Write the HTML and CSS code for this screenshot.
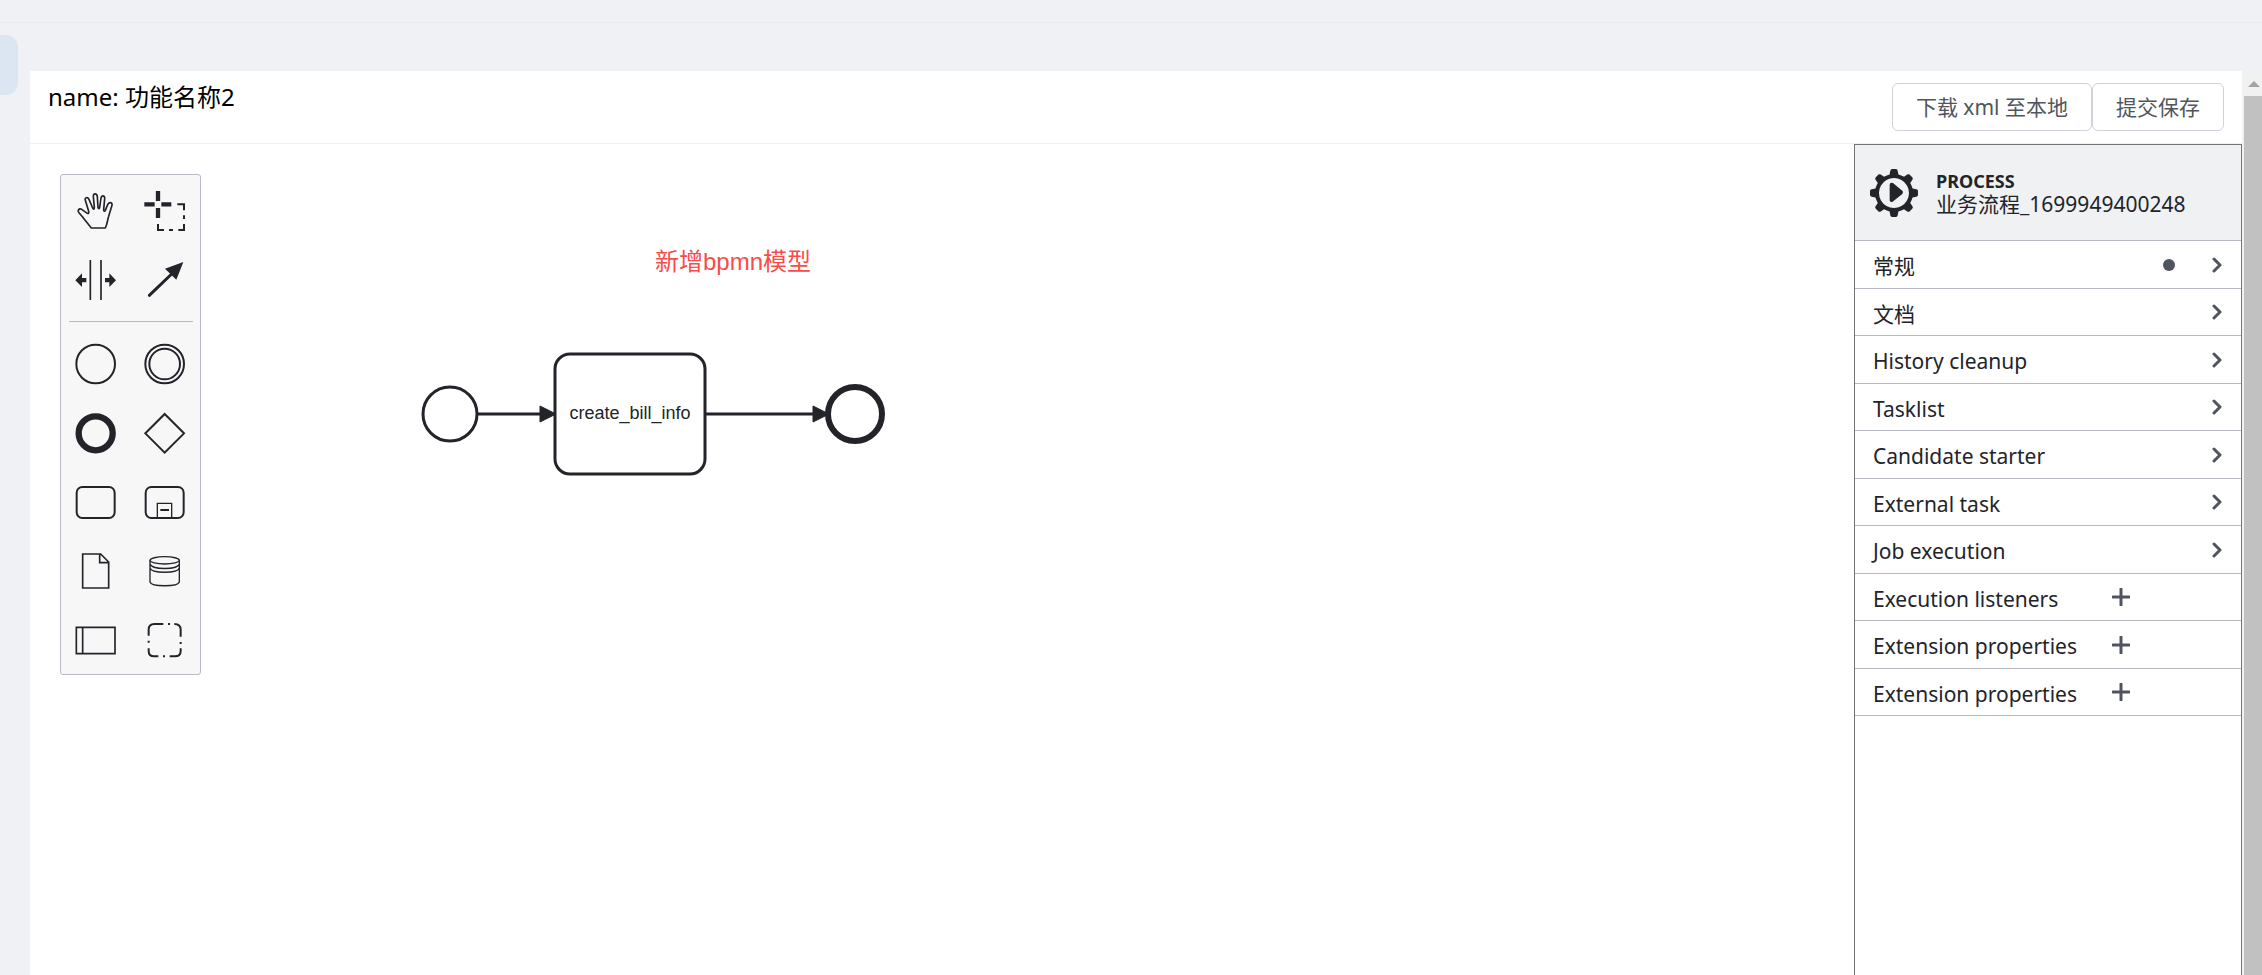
FILE: index.html
```html
<!DOCTYPE html>
<html lang="zh-CN">
<head>
<meta charset="utf-8">
<title>功能名称2</title>
<link rel="stylesheet" href="styles.css">
</head>
<body>
<div class="topbar"></div>
<div class="shell">
  <aside class="rail"><div class="rail-active"></div></aside>
  <main class="page">
    <div class="content">
      <header class="head">
        <div class="title">name: 功能名称2</div>
        <div class="actions">
          <button class="btn" type="button">下载 xml 至本地</button>
          <button class="btn" type="button">提交保存</button>
        </div>
      </header>
      <div class="editor">
        <section class="canvas">
          <svg class="diagram" width="900" height="400" viewBox="30 144 900 400">
            <text class="note" x="733" y="270" text-anchor="middle">新增bpmn模型</text>
            <g fill="none" stroke="#22242a" stroke-width="3">
              <circle cx="450" cy="414" r="27"/>
              <path d="M477 414H545M705 414H818"/>
              <rect x="555" y="354" width="150" height="120" rx="15"/>
              <circle cx="855" cy="414" r="27" stroke-width="6"/>
            </g>
            <path d="M540 406L556 414L540 422ZM813 406L829 414L813 422Z" fill="#22242a" stroke="#22242a" stroke-linejoin="round"/>
            <text class="task" x="630" y="419" text-anchor="middle">create_bill_info</text>
          </svg>
          <div class="palette">
            <div class="tools">
              <button class="tool" type="button" aria-label="Hand tool"><svg viewBox="33 33 207 207"><path stroke-width="5" stroke-linejoin="round" d="M124 189L103 163C97 154 92 149 87 143C81 136 87 129 95 133L112 145C116 147 117 144 116 139L106 106C103 97 113 95 117 103L128 129C130 134 133 133 133 128L130 95C129 84 141 84 142 95L144 127C145 132 148 132 149 127L153 99C155 89 165 91 164 101L161 134C161 139 164 140 166 136L173 119C177 109 188 112 186 121L176 154C172 166 172 177 166 189Z"/></svg></button>
              <button class="tool" type="button" aria-label="Lasso tool"><svg viewBox="240 33 207 207"><path stroke-width="13" d="M324 78V108M324 129V159M283 118H314M334 118H364"/><path stroke-width="6" d="M382 118H402V136M402 151V162M402 177V195H385M369 195H357M342 195H324V177"/></svg></button>
              <button class="tool" type="button" aria-label="Space tool"><svg viewBox="33 240 207 207"><path stroke-width="5" d="M121 285V405M153 285V405"/><path class="solid" d="M76 346L96 325V339H109V352H96V366ZM198 346L178 325V339H165V352H178V366Z"/></svg></button>
              <button class="tool" type="button" aria-label="Connect tool"><svg viewBox="240 240 207 207"><path stroke-width="9" stroke-linecap="round" d="M298 391L368 324"/><path class="solid" d="M400 291L345 311L379 344Z"/></svg></button>
            </div>
            <hr class="rule">
            <div class="tools">
              <button class="tool" type="button" aria-label="Start event"><svg viewBox="33 0 207 207"><circle cx="137" cy="105" r="58"/></svg></button>
              <button class="tool" type="button" aria-label="Intermediate event"><svg viewBox="240 0 207 207"><circle cx="344" cy="105" r="58"/><circle cx="344" cy="105" r="46"/></svg></button>
              <button class="tool" type="button" aria-label="End event"><svg viewBox="33 207 207 207"><circle cx="137" cy="313" r="51" stroke-width="19"/></svg></button>
              <button class="tool" type="button" aria-label="Gateway"><svg viewBox="240 207 207 207"><path d="M344 255L402 313L344 371L286 313Z"/></svg></button>
              <button class="tool" type="button" aria-label="Task"><svg viewBox="33 414 207 207"><rect x="80" y="474" width="114" height="93" rx="17"/></svg></button>
              <button class="tool" type="button" aria-label="Sub process"><svg viewBox="240 414 207 207"><rect x="287" y="474" width="114" height="93" rx="17"/><path stroke-width="4" d="M322 566V523H365V566"/><path d="M331 543H357"/></svg></button>
              <button class="tool" type="button" aria-label="Data object"><svg viewBox="33 81 207 207"><path d="M98 135H152L176 159V237H98ZM149 135V161H176" stroke-width="5"/></svg></button>
              <button class="tool" type="button" aria-label="Data store"><svg viewBox="240 81 207 207"><g stroke-width="4"><ellipse cx="344" cy="154" rx="44" ry="11"/><path d="M300 154V219C304 234 384 234 388 219V154M300 165C304 183 384 183 388 165M300 177C304 194 384 194 388 177"/></g></svg></button>
              <button class="tool" type="button" aria-label="Participant"><svg viewBox="33 288 207 207"><path stroke-width="5" d="M79 355H195V434H79ZM98 355V434"/></svg></button>
              <button class="tool" type="button" aria-label="Group"><svg viewBox="240 288 207 207"><path d="M296 380V362Q296 345 313 345H340M354 345H360M373 345Q392 345 392 362V383M392 399V405M392 418V426Q392 442 375 442H359M345 442H339M325 442H312Q296 442 296 426V418M296 401V395"/></svg></button>
            </div>
          </div>
        </section>
        <aside class="props">
          <div class="props-head">
            <svg class="gear" viewBox="84 327 144 144"><g fill="#22242a"><path fill-rule="evenodd" d="M156 342a57 57 0 1 0 .1 0ZM156 354a45 45 0 1 1-.1 0Z"/><g id="teeth"><path id="tooth" d="M142 347L145 332Q146 327 150 327H162Q166 327 167 332L170 347Z"/><use href="#tooth" transform="rotate(45 156 399)"/><use href="#tooth" transform="rotate(90 156 399)"/><use href="#tooth" transform="rotate(135 156 399)"/></g><use href="#teeth" transform="rotate(180 156 399)"/><path d="M149 374L177 397L149 420Z" stroke="#22242a" stroke-width="12" stroke-linejoin="round"/></g></svg>
            <div><div class="kind">PROCESS</div><div class="ident">业务流程_1699949400248</div></div>
          </div>
          <div class="groups">
            <button class="group" type="button"><span>常规</span><i class="dot"></i><svg class="chev" viewBox="0 0 10 16"><path d="M2 2L8 8L2 14"/></svg></button>
            <button class="group" type="button"><span>文档</span><svg class="chev" viewBox="0 0 10 16"><path d="M2 2L8 8L2 14"/></svg></button>
            <button class="group" type="button"><span>History cleanup</span><svg class="chev" viewBox="0 0 10 16"><path d="M2 2L8 8L2 14"/></svg></button>
            <button class="group" type="button"><span>Tasklist</span><svg class="chev" viewBox="0 0 10 16"><path d="M2 2L8 8L2 14"/></svg></button>
            <button class="group" type="button"><span>Candidate starter</span><svg class="chev" viewBox="0 0 10 16"><path d="M2 2L8 8L2 14"/></svg></button>
            <button class="group" type="button"><span>External task</span><svg class="chev" viewBox="0 0 10 16"><path d="M2 2L8 8L2 14"/></svg></button>
            <button class="group" type="button"><span>Job execution</span><svg class="chev" viewBox="0 0 10 16"><path d="M2 2L8 8L2 14"/></svg></button>
            <button class="group list" type="button"><span>Execution listeners</span><svg class="plus" viewBox="0 0 18 18"><path d="M9 1V17M1 9H17"/></svg></button>
            <button class="group list" type="button"><span>Extension properties</span><svg class="plus" viewBox="0 0 18 18"><path d="M9 1V17M1 9H17"/></svg></button>
            <button class="group list" type="button"><span>Extension properties</span><svg class="plus" viewBox="0 0 18 18"><path d="M9 1V17M1 9H17"/></svg></button>
          </div>
        </aside>
      </div>
    </div>
    <div class="scrollbar"><svg class="up" viewBox="0 0 12 6"><path d="M0 6L6 0L12 6Z"/></svg><div class="thumb"></div></div>
  </main>
</div>
</body>
</html>
```
FILE: styles.css
```css
* { box-sizing: border-box; }
body {
  margin: 0;
  height: 100vh;
  overflow: hidden;
  display: flex;
  flex-direction: column;
  background: #f0f1f5;
  color: #22242a;
  font-family: "Noto Sans", "Noto Sans CJK SC", sans-serif;
}
button { font: inherit; color: inherit; background: none; border: 0; padding: 0; cursor: pointer; }
svg { display: block; }

.topbar { height: 23px; border-bottom: 1px solid #e9eaee; flex: none; }
.shell { flex: 1; display: flex; min-height: 0; }
.rail { width: 30px; padding-top: 12px; flex: none; }
.rail-active { width: 18px; height: 60px; background: #dce6f2; border-radius: 0 12px 12px 0; }
.page { flex: 1; display: flex; min-width: 0; margin-top: 48px; background: #fff; }
.content { flex: 1; min-width: 0; display: flex; flex-direction: column; }

.head {
  height: 73px;
  flex: none;
  display: flex;
  justify-content: space-between;
  padding: 12px 18px 0;
  border-bottom: 1px solid #f0f1f3;
}
.title { font-size: 24px; line-height: 28px; color: #000; }
.actions { display: flex; }
.btn {
  height: 48px;
  padding: 0 23px;
  font-size: 21px;
  line-height: 30px;
  color: #505560;
  background: #fff;
  border: 1px solid #cfd2dc;
  border-radius: 6px;
}

.editor { flex: 1; display: flex; min-height: 0; }
.canvas { flex: 1; min-width: 0; position: relative; overflow: hidden; }
.diagram { position: absolute; left: 0; top: 0; }
.note { font: 24px "Liberation Sans", "Noto Sans CJK SC", sans-serif; fill: #fa4b4b; }
.task { font: 18px "Liberation Sans", sans-serif; fill: #22242a; }

.palette {
  position: absolute;
  left: 30px;
  top: 30px;
  padding: 1px 0 0;
  width: 141px;
  background: #f7f7f8;
  border: 1px solid #b9b9c8;
  border-radius: 3px;
}
.tools { display: grid; grid-template-columns: 69px 69px; }
.tool { height: 69px; }
.tool svg { width: 69px; height: 69px; fill: none; stroke: #22242a; stroke-width: 6; }
.tool .solid { fill: #22242a; stroke: none; }
.rule { margin: 7px 7px 7px 8px; border: 0; border-top: 1px solid #b9b9c8; }

.props { width: 388px; flex: none; border: 1px solid #757575; border-bottom: 0; background: #fff; }
.props-head {
  height: 96px;
  display: flex;
  align-items: center;
  gap: 18px;
  padding: 0 15px;
  background: #f0f1f3;
  border-bottom: 1px solid #b9b9c8;
}
.gear { width: 48px; height: 48px; }
.kind { font-size: 18px; font-weight: 700; line-height: 23px; }
.ident { font-size: 21px; line-height: 23px; }
.groups { display: flex; flex-direction: column; }
.group {
  height: 48px;
  display: flex;
  align-items: center;
  padding: 0 19px 0 18px;
  font-size: 21px;
  line-height: 30px;
  border-bottom: 1px solid #b9b9c8;
}
.group:nth-child(even) { height: 47px; }
.group span { margin-right: auto; padding-top: 3px; }
.list { display: grid; grid-template-columns: 1fr 110px; }
.dot { width: 12px; height: 12px; border-radius: 50%; background: #50545f; margin-right: 37px; }
.chev { width: 10px; height: 16px; }
.plus { width: 18px; height: 18px; }
.chev path, .plus path { fill: none; stroke: #50545f; stroke-width: 3; stroke-linecap: round; stroke-linejoin: round; }

.scrollbar { width: 20px; flex: none; background: #f1f1f1; display: flex; flex-direction: column; padding-left: 2px; }
.up { width: 12px; height: 6px; margin: 10px 4px 9px; fill: #a3a3a3; }
.thumb { flex: 1; background: #c1c1c1; }
```
